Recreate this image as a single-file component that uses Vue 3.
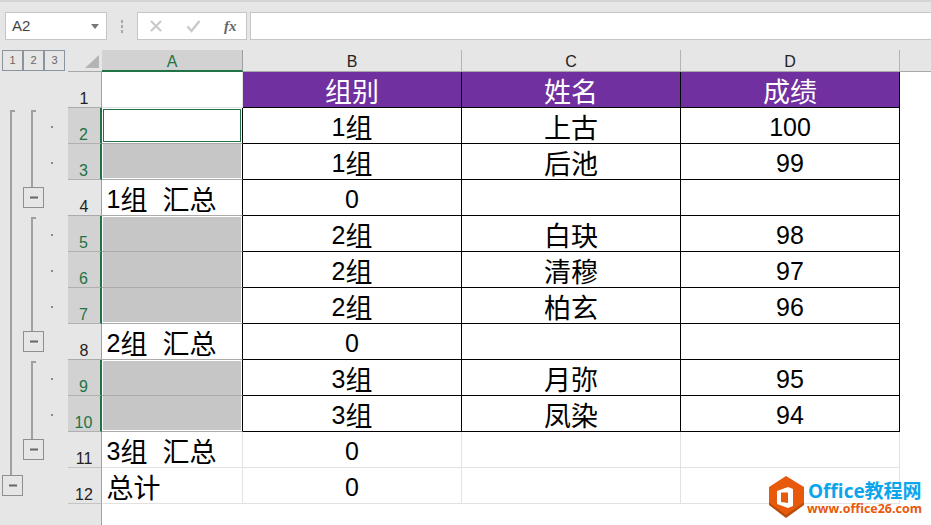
<script setup>
const colHeads = [
  { label: 'A', sel: true },
  { label: 'B' },
  { label: 'C' },
  { label: 'D' },
]

const rows = [
  { n: 1, cells: ['', '组别', '姓名', '成绩'], head: true },
  { n: 2, cells: ['', '1组', '上古', '100'], sel: true, active: true, edge: 'first', boxed: true },
  { n: 3, cells: ['', '1组', '后池', '99'], sel: true, edge: 'last', fill: true, boxed: true },
  { n: 4, cells: ['1组  汇总', '0', '', ''], boxed: true },
  { n: 5, cells: ['', '2组', '白玦', '98'], sel: true, edge: 'first', fill: true, boxed: true },
  { n: 6, cells: ['', '2组', '清穆', '97'], sel: true, fill: true, boxed: true },
  { n: 7, cells: ['', '2组', '柏玄', '96'], sel: true, edge: 'last', fill: true, boxed: true },
  { n: 8, cells: ['2组  汇总', '0', '', ''], boxed: true },
  { n: 9, cells: ['', '3组', '月弥', '95'], sel: true, edge: 'first', fill: true, boxed: true },
  { n: 10, cells: ['', '3组', '凤染', '94'], sel: true, edge: 'last', fill: true, boxed: true },
  { n: 11, cells: ['3组  汇总', '0', '', ''] },
  { n: 12, cells: ['总计', '0', '', ''] },
]

const parts = (text) => (text.match(/\d+|[^\d]+/g) || []).map((t) => ({ t, num: /\d/.test(t) }))

const bars = [
  { x: 10, y1: 110, y2: 475, hook: 5 },
  { x: 31, y1: 110, y2: 187, hook: 5 },
  { x: 31, y1: 217, y2: 331, hook: 5 },
  { x: 31, y1: 361, y2: 439, hook: 5 },
]
const dots = [126, 162, 234, 270, 306, 378, 414]
const minus = [
  { x: 23.5, y: 187.5 },
  { x: 23.5, y: 331.5 },
  { x: 23.5, y: 439.5 },
  { x: 2.5, y: 475.5 },
]
</script>

<template>
  <div class="app">
    <div class="toolbar">
      <div class="namebox">
        <span class="nametext">A2</span>
        <i class="caret"></i>
      </div>
      <div class="grip"><i></i><i></i><i></i></div>
      <div class="fbtns">
        <svg width="14" height="14" viewBox="0 0 14 14"><path d="M2 2l10 10M12 2L2 12" stroke="#c9c9c9" stroke-width="2.2" fill="none" /></svg>
        <svg width="15" height="14" viewBox="0 0 15 14"><path d="M1.5 7.5l4 4.5L13.5 2" stroke="#c9c9c9" stroke-width="2.4" fill="none" /></svg>
        <span class="fx">fx</span>
      </div>
      <div class="finput"></div>
    </div>

    <div class="sheet">
      <div class="levels">
        <span v-for="l in 3" :key="l" class="level">{{ l }}</span>
      </div>
      <div class="corner"><i></i></div>
      <div v-for="c in colHeads" :key="c.label" class="colhead" :class="{ sel: c.sel }">{{ c.label }}</div>
      <div class="colrest"></div>

      <div class="outline">
        <svg width="68" height="431" viewBox="0 72 68 431">
          <path v-for="(b, i) in bars" :key="i" :d="`M${b.x + b.hook} ${b.y1 + 1}H${b.x + 1}V${b.y2}`" stroke="#a0a0a0" stroke-width="2" fill="none" />
          <rect v-for="d in dots" :key="d" x="51" :y="d" width="2" height="2" fill="#8c8c8c" />
          <g v-for="(m, i) in minus" :key="'m' + i">
            <rect :x="m.x" :y="m.y" width="20" height="20" fill="#e6e6e6" stroke="#8f8f8f" />
            <rect :x="m.x + 6.5" :y="m.y + 9" width="8" height="2" fill="#666" />
          </g>
        </svg>
      </div>

      <template v-for="r in rows" :key="r.n">
        <div class="rownum" :class="{ sel: r.sel, soft: r.n > 10 }"><span>{{ r.n }}</span></div>
        <div
          v-for="(c, i) in r.cells"
          :key="i"
          class="cell"
          :class="[
            i === 0 ? 'first' : 'mid',
            {
              head: r.head && i > 0,
              boxed: r.boxed || (r.head && i > 0),
              fill: r.fill && i === 0,
              active: r.active && i === 0,
              top: r.edge === 'first' && i === 0,
              last: r.edge === 'last' && i === 0,
            },
          ]"
        >
          <span class="txt"><span v-for="(p, k) in parts(c)" :key="k" :class="{ num: p.num }">{{ p.t }}</span></span>
        </div>
        <div class="rest"></div>
      </template>
      <div class="bottomgutter"></div>
      <div class="rownum blank"></div>
    </div>

    <div class="mark">
      <svg width="38" height="44" viewBox="0 0 38 44">
        <path d="M19 3L37 13V30L19 43L2 30V13Z" fill="#b84a0a" />
        <path d="M19 1L37 12V27.5L19 40L2 27.5V12Z" fill="#e8590c" />
        <path d="M10 16L21 12L26 14V31L21 33L10 29Z" fill="#fff" />
        <path d="M14 17.5H21V28L14 27Z" fill="#e8590c" />
      </svg>
      <div class="marktext">
        <div class="m1">Office教程网</div>
        <div class="m2">www.office26.com</div>
      </div>
    </div>
  </div>
</template>

<style>
html, body { margin: 0; background: #fff; }
</style>

<style scoped>
.app {
  position: relative;
  width: 931px;
  height: 525px;
  overflow: hidden;
  background: #fff;
  font-family: "Liberation Sans", Arial, sans-serif;
}
.toolbar {
  box-sizing: border-box;
  height: 50px;
  background: #e6e6e6;
  border-top: 2px solid #d4d4d4;
  padding: 10px 0 0 5px;
  display: flex;
  align-items: flex-start;
}
.namebox, .fbtns, .finput {
  box-sizing: border-box;
  height: 28px;
  background: #fff;
  border: 1px solid #c6c6c6;
}
.namebox {
  width: 102px;
  display: flex;
  align-items: center;
  justify-content: space-between;
  padding: 0 7px 0 6px;
  font-size: 15px;
  color: #444;
}
.nametext { padding-bottom: 2px; }
.caret {
  width: 0;
  height: 0;
  border-left: 4px solid transparent;
  border-right: 4px solid transparent;
  border-top: 5px solid #777;
}
.grip {
  width: 30px;
  height: 28px;
  display: flex;
  flex-direction: column;
  align-items: center;
  justify-content: center;
  gap: 2px;
}
.grip i { width: 2px; height: 3px; background: #a8a8a8; }
.fbtns {
  width: 110px;
  display: flex;
  align-items: center;
  gap: 23px;
  padding-left: 11px;
}
.fx {
  font-family: "Liberation Serif", serif;
  font-style: italic;
  font-weight: 700;
  font-size: 15px;
  color: #666;
}
.finput { flex: 1; margin: 0 0 0 3px; border-right: 0; }

.sheet {
  display: grid;
  grid-template-columns: 68px 34px 141px 219px 219px 219px 31px;
  grid-template-rows: 22px repeat(12, 36px) 21px;
}
.levels {
  background: #e6e6e6;
  display: flex;
  padding-left: 2px;
  align-items: flex-start;
}
.level {
  box-sizing: border-box;
  width: 21px;
  height: 21px;
  border: 1px solid #8a949e;
  font-size: 11px;
  line-height: 19px;
  text-align: center;
  color: #666;
}
.corner {
  background: #e6e6e6;
  border-bottom: 1px solid #a8a8a8;
  box-sizing: border-box;
  display: flex;
  justify-content: flex-end;
  padding: 5px 3px 0 0;
}
.corner i {
  width: 14px;
  height: 13px;
  background: #b4b4b4;
  clip-path: polygon(100% 0, 100% 100%, 0 100%);
}
.colhead {
  box-sizing: border-box;
  background: #e6e6e6;
  border-right: 1px solid #b4b4b4;
  border-bottom: 1px solid #a8a8a8;
  text-align: center;
  font-size: 16px;
  line-height: 24px;
  color: #222;
}
.colhead.sel {
  background: #d2d2d2;
  color: #217346;
  border-bottom: 2px solid #217346;
  border-right-color: #9e9e9e;
}
.colrest { background: #e6e6e6; border-bottom: 1px solid #a8a8a8; box-sizing: border-box; }
.outline {
  grid-column: 1;
  grid-row: 2 / 14;
  background: #e6e6e6;
  height: 432px;
}
.outline svg { display: block; }
.bottomgutter { grid-column: 1; grid-row: 14; background: #e6e6e6; }
.rownum {
  grid-column: 2;
  box-sizing: border-box;
  background: #e6e6e6;
  border-right: 1px solid #a0a0a0;
  border-bottom: 1px solid #ababab;
  display: flex;
  align-items: flex-end;
  justify-content: center;
  font-size: 16px;
  line-height: 17px;
  color: #222;
  padding: 0 1px 0 0;
}
.rownum.sel {
  background: #d2d2d2;
  color: #217346;
  border-right: 2px solid #217346;
  border-bottom-color: #b0b0b0;
}
.rownum.soft { border-bottom-color: #c4c4c4; }
.rownum.blank { grid-column: 2; grid-row: 14; border-bottom: 0; }
.cell {
  box-sizing: border-box;
  border-right: 1px solid #e2e2e2;
  border-bottom: 1px solid #e2e2e2;
  background: #fff;
  display: flex;
  align-items: flex-end;
  font-family: "Noto Sans CJK SC", "Liberation Sans", sans-serif;
  font-size: 27px;
  line-height: 32px;
  color: #000;
  white-space: pre;
  word-spacing: 1.5px;
}
.cell.mid { justify-content: center; }
.cell.first { padding-left: 4.5px; }
.cell.boxed { border-right-color: #000; border-bottom-color: #000; }
.cell.first.boxed { border-bottom-color: #aaa; }
.cell.head { background: #7030a0; color: #fff; }
.cell.fill {
  background: #c6c6c6;
  box-shadow: inset 1px 0 #fff, inset -1px 0 #fff;
  border-bottom-color: #b4b4b4;
}
.cell.fill.top { box-shadow: inset 1px 0 #fff, inset -1px 0 #fff, inset 0 1px #fff; }
.cell.fill.last { box-shadow: inset 1px 0 #fff, inset -1px 0 #fff, inset 0 -1px #fff; border-bottom-color: #aaa; }
.cell.active { box-shadow: inset 0 0 0 1px #fff, inset 0 0 0 2px #217346; }
.txt { display: block; }
.num { font-family: "Liberation Sans", sans-serif; font-size: 25px; line-height: 0; vertical-align: 2px; }
.rest { border-bottom: 1px solid transparent; }

.mark {
  position: absolute;
  left: 767px;
  top: 475px;
  display: flex;
  gap: 3px;
}
.marktext { padding-top: 5px; }
.m1 {
  font-family: "Open Sans", "Noto Sans CJK SC", sans-serif;
  font-weight: 700;
  font-size: 19px;
  line-height: 22px;
  color: #0ba5ec;
  white-space: nowrap;
}
.m2 {
  font-family: "Open Sans", sans-serif;
  font-weight: 700;
  font-size: 12.5px;
  line-height: 14px;
  margin-left: -1px;
  color: #e8590c;
  white-space: nowrap;
}
</style>
